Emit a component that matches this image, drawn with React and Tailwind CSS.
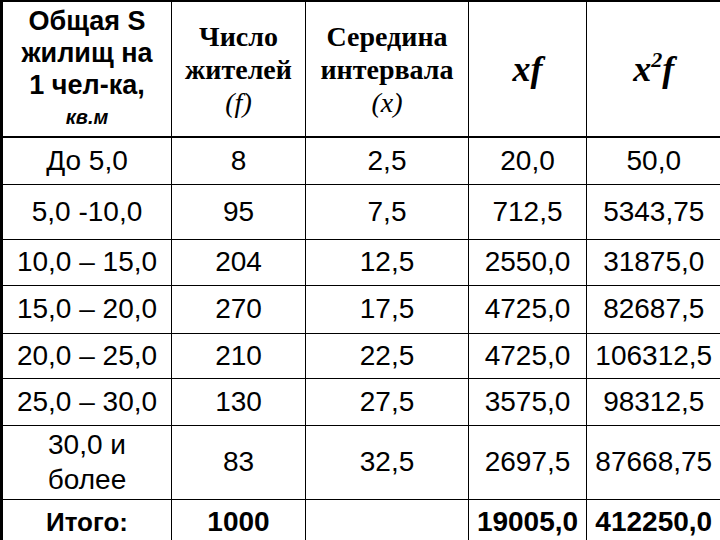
const ROWS = [
  { h: "h-[47px]", cells: ["До 5,0", "8", "2,5", "20,0", "50,0"] },
  { h: "h-[55px]", cells: ["5,0 -10,0", "95", "7,5", "712,5", "5343,75"] },
  { h: "h-[46px]", cells: ["10,0 – 15,0", "204", "12,5", "2550,0", "31875,0"] },
  { h: "h-[48px]", cells: ["15,0 – 20,0", "270", "17,5", "4725,0", "82687,5"] },
  { h: "h-[45px]", cells: ["20,0 – 25,0", "210", "22,5", "4725,0", "106312,5"] },
  { h: "h-[47px]", cells: ["25,0 – 30,0", "130", "27,5", "3575,0", "98312,5"] },
  { h: "h-[74px]", cells: [["30,0 и", "более"], "83", "32,5", "2697,5", "87668,75"] },
];

const td = "border border-black text-center align-middle p-0";
const head = "border-t-2 border-b-2 font-['Liberation_Serif',serif] font-bold";

function Cell({ value, bold }) {
  if (Array.isArray(value)) {
    return (
      <div className="leading-[35px]">
        {value.map((l) => (
          <div key={l}>{l}</div>
        ))}
      </div>
    );
  }
  return <span className={bold ? "font-bold" : ""}>{value}</span>;
}

export default function App() {
  return (
    <div className="w-[720px] h-[540px] overflow-hidden bg-white text-black font-['Liberation_Sans',sans-serif]">
      <table className="table-fixed border-collapse w-[720px] text-[28px] leading-none">
        <colgroup>
          <col className="w-[170px]" />
          <col className="w-[134px]" />
          <col className="w-[163px]" />
          <col className="w-[118px]" />
          <col className="w-[135px]" />
        </colgroup>
        <tbody>
          <tr className="h-[136px]">
            <td className={`${td} border-l-[3px] border-t-2 border-b-2 font-bold text-[27px] leading-[32px]`}>
              <div>Общая S</div>
              <div>жилищ на</div>
              <div>1 чел-ка,</div>
              <div className="italic text-[20px] leading-[32px]">кв.м</div>
            </td>
            <td className={`${td} ${head} text-[28px] leading-[33px]`}>
              <div>Число</div>
              <div>жителей</div>
              <div className="italic font-normal">(f)</div>
            </td>
            <td className={`${td} ${head} text-[28px] leading-[33px]`}>
              <div>Середина</div>
              <div>интервала</div>
              <div className="italic font-normal">(x)</div>
            </td>
            <td className={`${td} ${head} italic text-[36px]`}>xf</td>
            <td className={`${td} ${head} border-r-2 italic text-[36px]`}>
              x<sup className="text-[22px] -top-[14px] relative align-baseline">2</sup>f
            </td>
          </tr>
          {ROWS.map((r, i) => (
            <tr key={i} className={r.h}>
              {r.cells.map((c, j) => (
                <td
                  key={j}
                  className={`${td} ${j === 0 ? "border-l-[3px]" : ""} ${j === 4 ? "border-r-2" : ""}`}
                >
                  <Cell value={c} />
                </td>
              ))}
            </tr>
          ))}
          <tr className="h-[46px]">
            {["Итого:", "1000", "", "19005,0", "412250,0"].map((c, j) => (
              <td
                key={j}
                className={`${td} ${j === 0 ? "border-l-[3px] text-[26px]" : ""} ${j === 4 ? "border-r-2" : ""}`}
              >
                <Cell value={c} bold />
              </td>
            ))}
          </tr>
        </tbody>
      </table>
    </div>
  );
}
